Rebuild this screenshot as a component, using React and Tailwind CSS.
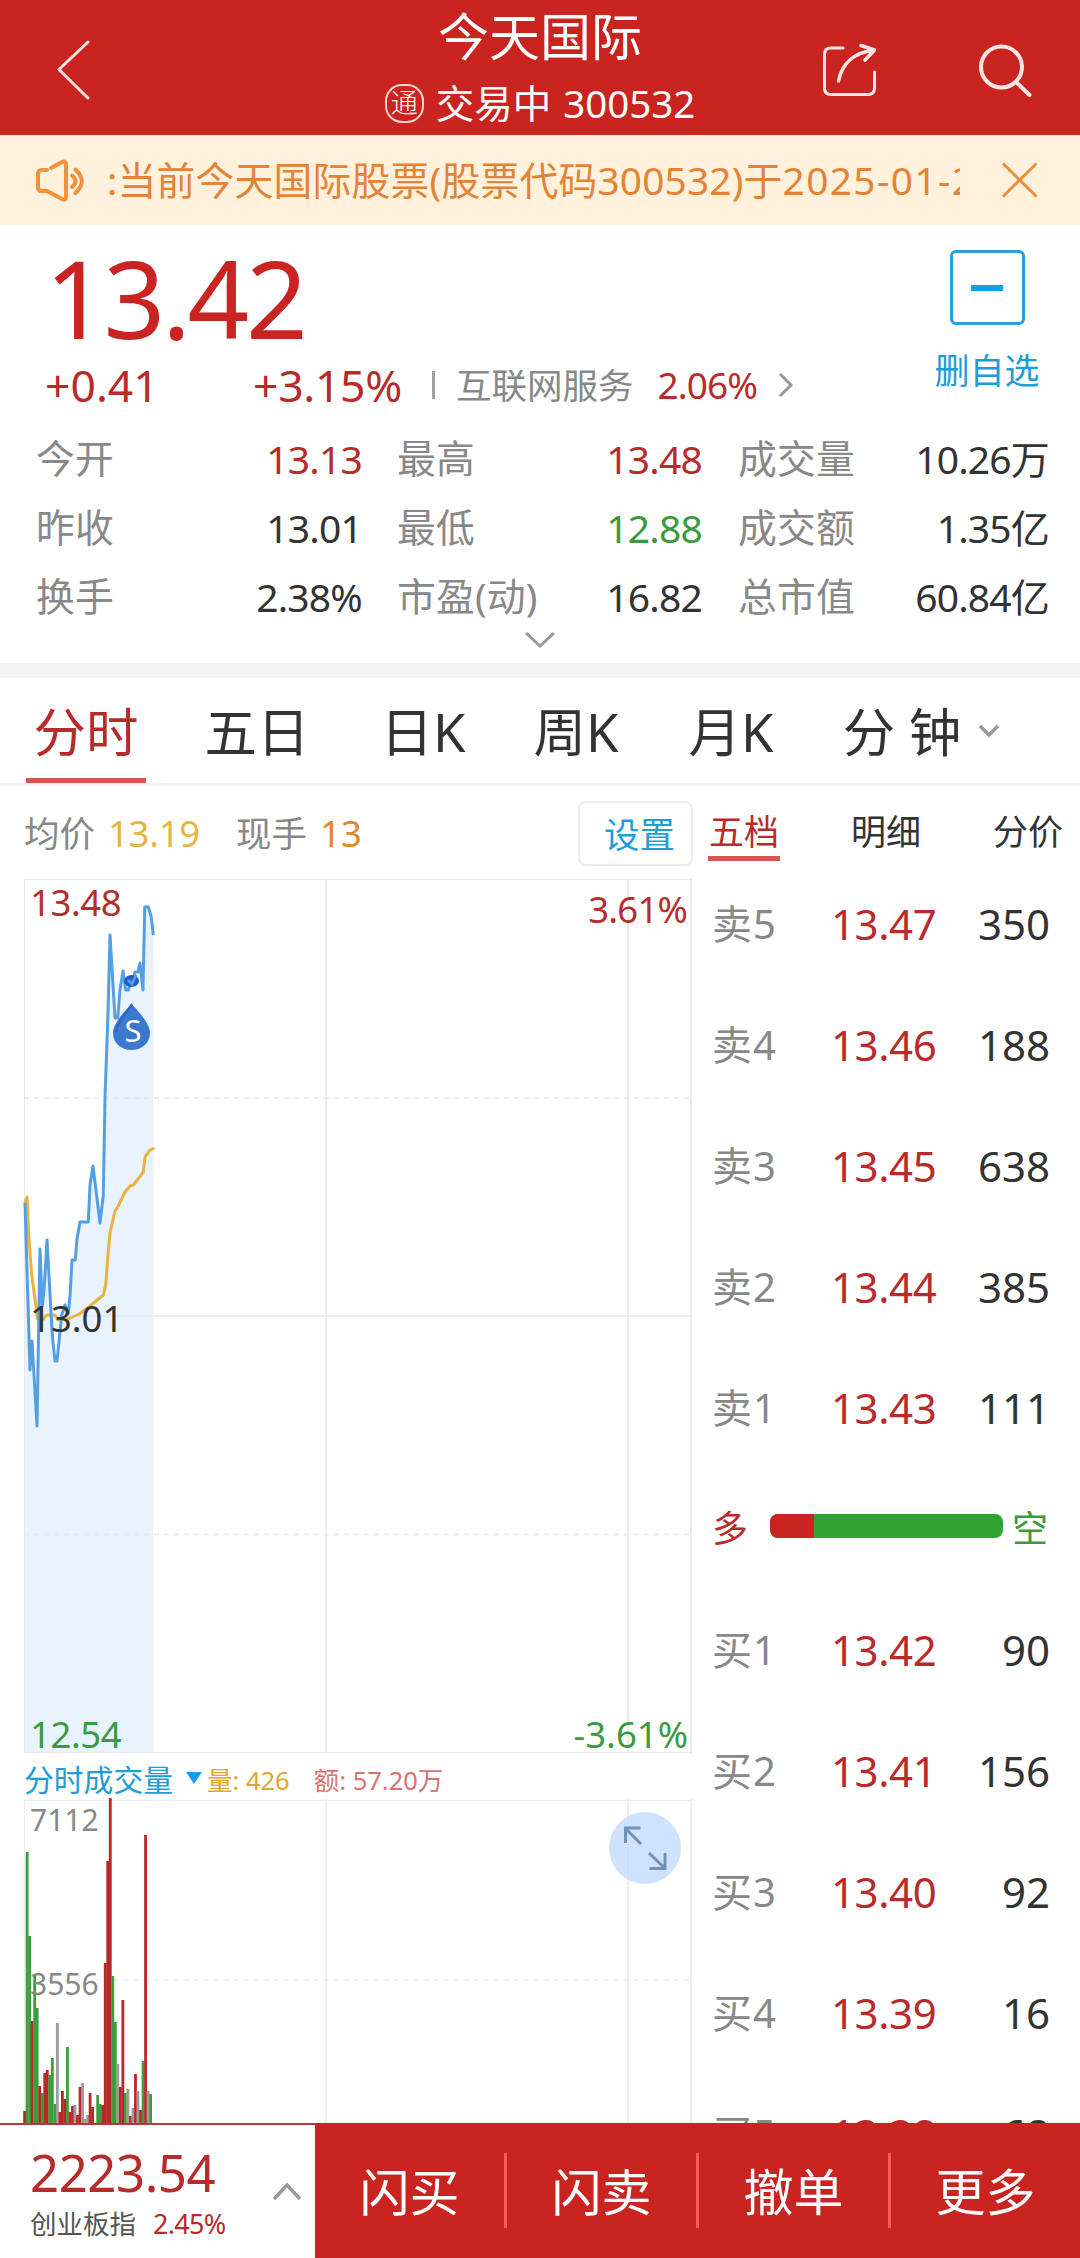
import React, {useState} from 'react';

const quoteRows = [
    [['今开', '13.13', 'text-[#b92b2b]'], ['最高', '13.48', 'text-[#b92b2b]'], ['成交量', '10.26万', 'text-[#333]']],
    [['昨收', '13.01', 'text-[#333]'], ['最低', '12.88', 'text-[#3a9b3c]'], ['成交额', '1.35亿', 'text-[#333]']],
    [['换手', '2.38%', 'text-[#333]'], ['市盈(动)', '16.82', 'text-[#333]'], ['总市值', '60.84亿', 'text-[#333]']],
];

const sells = [
    ['卖5', '13.47', 350],
    ['卖4', '13.46', 188],
    ['卖3', '13.45', 638],
    ['卖2', '13.44', 385],
    ['卖1', '13.43', 111],
];

const buys = [
    ['买1', '13.42', 90],
    ['买2', '13.41', 156],
    ['买3', '13.40', 92],
    ['买4', '13.39', 16],
    ['买5', '13.38', 68],
];

const pricePoints = '25,1203 30,1370 32,1341 37,1426 40,1249 42.3,1306 44.3,1287 47,1240 52.3,1335 55,1361 57,1361 61.7,1315 65,1305 68.3,1313 70,1296 72,1260 75.3,1260 77,1239 80,1222 88.3,1222 90,1185 93,1166 100,1223 103.3,1195 105,1097 108,1013 110,935 115,1018 117.7,1018 120,990 123,971 125.7,990 128.3,990 130.7,982 133.3,979 135,972 138,972 140,963 143,990 144.7,907 148.3,907 151.3,917 153.3,935';
const avgPoints = '25,1203 27,1197 28.7,1235 31.7,1275 36,1306 37.3,1319 43.3,1319 46.7,1315 55,1315 57.7,1320 68.3,1319 80,1313.5 90,1306 103.3,1295 105.7,1285 108,1254 110,1233 115,1211 118.3,1206 125,1192 130,1186 133.3,1185 143.3,1172 145,1157 150,1150 153.3,1148.5';

// [方向, 高度]  r: 涨  g: 跌  n: 平
const volumes = [
    ['r', 12], ['g', 271], ['g', 187], ['r', 102], ['g', 148], ['g', 115], ['r', 37], ['g', 30], ['r', 50], ['r', 53],
    ['g', 48], ['g', 65], ['g', 19], ['n', 100], ['r', 11], ['r', 32], ['r', 24], ['g', 76], ['r', 11], ['r', 17],
    ['n', 18], ['r', 8], ['r', 36], ['n', 40], ['n', 4], ['n', 8], ['r', 30], ['r', 16], ['n', 0], ['g', 28],
    ['g', 19], ['r', 18], ['r', 160], ['r', 262], ['r', 325], ['g', 147], ['g', 101], ['n', 59], ['r', 36], ['r', 123],
    ['g', 30], ['n', 34], ['r', 7], ['n', 15], ['r', 49], ['n', 32], ['r', 13], ['g', 62], ['r', 288], ['n', 32], ['g', 29],
];
const volumeColor = {r: '#b92727', g: '#3b9d3b', n: '#9c9c9c'};

const Header = () => (
    <header className="h-[135px] shrink-0 bg-[#ca2421] flex text-white">
        <svg className="w-[360px] h-[135px]" viewBox="0 0 360 135" fill="none">
            <path d="M88 42L59 69.5L88 98" stroke="#ffe4e2" strokeWidth="3" strokeLinecap="round"/>
        </svg>
        <div className="w-[360px] flex flex-col items-center">
            <h1 className="text-[51px] leading-[73px] h-[77px]">今天国际</h1>
            <div className="flex items-center h-[52px] text-[38.5px] leading-[52px]">
                <span className="w-[39px] h-[39px] mr-3 rounded-[17px] border-2 border-[#ffd5d2] text-[27px] leading-[34px] text-center font-light">通</span>
                <span>交易中</span>
                <span className="ml-3">300532</span>
            </div>
        </div>
        <svg className="w-[360px] h-[135px]" viewBox="720 0 360 135" fill="none" stroke="#ffe6e4" strokeLinecap="round">
            <path d="M843 48H831Q824.5 48 824.5 54.500V88Q824.5 94.500 831 94.500H868Q874.500 94.500 874.500 88V72" strokeWidth="3"/>
            <path d="M838.500 81C842 64 852 53 874 50M861 45.500L874.500 50L865 60" strokeWidth="3.600" strokeLinejoin="round"/>
            <circle cx="1001.500" cy="67" r="20.500" strokeWidth="4"/>
            <path d="M1016 82L1029.500 95" strokeWidth="4"/>
        </svg>
    </header>
);

const Notice = () => (
    <div className="h-[90px] shrink-0 bg-[#fff1dc] flex items-center">
        <svg className="w-[105px] h-[90px] shrink-0" viewBox="0 135 105 90" fill="none" stroke="#f0923c" strokeWidth="4"
             strokeLinecap="round" strokeLinejoin="round">
            <path d="M47 170H42Q38 170 38 174V187Q38 191 42 191H47L62 199Q66 201 66 197V165Q66 160 62 162L51 168"/>
            <path d="M72 175.500Q79 181 72 187M75.500 169.500Q88 181 75.500 193"/>
        </svg>
        <div className="w-[855px] overflow-hidden whitespace-nowrap text-[38.8px] leading-[92px] tracking-[0.2px] text-[#e38338]">
            <span className="-ml-[37px]">示:当前今天国际股票(股票代码300532)于</span>
            <span className="tracking-[1.4px]">2025-01-24</span>
        </div>
        <svg className="w-[120px] h-[90px] shrink-0" viewBox="960 135 120 90" stroke="#e5923c" strokeWidth="3">
            <path d="M1003 163.500L1036.500 196.500M1036.500 163.500L1003 196.500"/>
        </svg>
    </div>
);

const Quote = () => (
    <section className="h-[438px] shrink-0 flex flex-col">
        <div className="flex h-[200px]">
            <div className="flex-1">
                <div className="pl-[45px] pt-[17px] text-[108px] leading-[112px] h-[132px] tracking-[-3.3px] text-[#c92422]">13.42</div>
                <div className="flex items-center h-[56px] leading-[56px] text-[#b92b2b]">
                    <span className="pl-[45px] w-[253px] text-[44.5px]">+0.41</span>
                    <span className="w-[136px] whitespace-nowrap text-[44.500px] tracking-[-0.3px]">+3.15%</span>
                    <span className="ml-[43px] w-[3px] h-[28px] bg-[#a0a0a0]"/>
                    <span className="ml-[21px] text-[35.5px] text-[#888]">互联网服务</span>
                    <span className="ml-[24px] text-[37px] tracking-[-0.9px]">2.06%</span>
                    <svg className="ml-[21px] w-4 h-7" viewBox="0 0 16 28" fill="none" stroke="#999" strokeWidth="3">
                        <path d="M2 3L13 14L2 25"/>
                    </svg>
                </div>
            </div>
            <div className="w-[186px] pt-[25px] flex flex-col items-center">
                <div className="w-[75px] h-[75px] border-3 border-[#2b9fd6] rounded-md flex items-center justify-center">
                    <span className="w-8 h-[6px] bg-[#119fe9]"/>
                </div>
                <span className="mt-[21px] text-[35px] leading-[50px] text-[#209cd6]">删自选</span>
            </div>
        </div>
        <div className="text-[39px] -mt-[1px]">
            {quoteRows.map((row, i) => (
                <div key={i} className="flex h-[69px] leading-[69px] pl-[36px] pr-[31px]">
                    {row.map(([label, value, color], j) => (
                        <div key={label} className={`flex justify-between ${j === 2 ? 'w-[312px]' : j === 1 ? 'w-[306px] mr-[36px]' : 'w-[327px] mr-[35px]'}`}>
                            <span className="text-[38.8px] tracking-[0.2px] text-[#888]">{label}</span>
                            <span className={`tracking-[-0.8px] ${color}`}>{value}</span>
                        </div>
                    ))}
                </div>
            ))}
        </div>
        <svg className="w-[34px] h-[20px] mx-auto -mt-[1px]" viewBox="0 0 34 20" fill="none" stroke="#999" strokeWidth="3">
            <path d="M3 3L17 16L31 3"/>
        </svg>
    </section>
);

const Tabs = ({active, onChange}) => {
    const tabs = [
        ['分时', 'w-[120px] ml-[26px]'],
        ['五日', 'w-[120px] ml-[51px]'],
        ['日K', 'w-[120px] ml-[46px]'],
        ['周K', 'w-[120px] ml-[33px]'],
        ['月K', 'w-[120px] ml-[35px]'],
        ['分 钟', 'w-[140px] ml-[41px]'],
    ];
    return (
        <nav className="h-[108px] shrink-0 flex border-b-3 border-[#f2f2f2]">
            {tabs.map(([name, box]) => (
                <button key={name} onClick={() => onChange(name)}
                        className={`${box} h-[105px] pt-[9px] text-[52.5px] whitespace-nowrap border-b-5 ${active === name ? 'text-[#b92b2b] border-[#d9534f]' : 'text-[#333] border-transparent'}`}>
                    {name}
                </button>
            ))}
            <svg className="w-6 h-6 mt-[41px] ml-[5px]" viewBox="0 0 24 24" fill="none" stroke="#999" strokeWidth="3.5">
                <path d="M3 7L12 16L21 7"/>
            </svg>
        </nav>
    );
};

const PriceChart = () => (
    <svg className="block w-[700px] h-[890px]" viewBox="0 870 700 890" fill="none">
        <polygon points={`${pricePoints} 153.3,1752 25,1752`} fill="#e8f3fd"/>
        <g stroke="#e8e8e8" strokeWidth="1.600">
            <path d="M24 879.500H692M24 1752.500H692" strokeWidth="1.200"/>
            <path d="M24.500 879V1753" strokeWidth="1"/>
            <path d="M326 878V1754M628 878V1754M691 878V1754"/>
            <path d="M24 1316H691"/>
            <path d="M24 1098H691M24 1534.500H691" strokeDasharray="5 5"/>
        </g>
        <polyline points={avgPoints} stroke="#eab23f" strokeWidth="3" strokeLinejoin="round" strokeLinecap="round"/>
        <polyline points={pricePoints} stroke="#539fe2" strokeWidth="3" strokeLinejoin="round"/>
        <ellipse cx="131.500" cy="981" rx="7.500" ry="6" fill="#2459bd"/>
        <path d="M128 980L132 984L136 975" stroke="#4d9bee" strokeWidth="3"/>
        <path d="M131.500 1003C136 1010 150 1022 150 1033C150 1043 142 1050 131.500 1050C121 1050 113 1043 113 1033C113 1022 127 1010 131.500 1003Z" fill="#3b78d0"/>
        <path d="M131.500 1005C127 1012 117 1022 116 1032" stroke="#2f62bd" strokeWidth="2"/>
        <text x="133" y="1042" textAnchor="middle" fontSize="31" fill="#fff">S</text>
        <g fontSize="36.500">
            <text x="30" y="915.500" letterSpacing="-0.4" fill="#b52d2d">13.48</text>
            <text x="30" y="1332" fill="#333">13.01</text>
            <text x="30" y="1747.500" letterSpacing="-0.4" fill="#3b9b3d">12.54</text>
            <text x="687" y="922.500" letterSpacing="-0.8" textAnchor="end" fill="#b52d2d">3.61%</text>
            <text x="688" y="1747.500" textAnchor="end" fill="#3b9b3d">-3.61%</text>
        </g>
    </svg>
);

const VolumeChart = () => (
    <svg className="block w-[700px] h-[327px]" viewBox="0 1796 700 327" fill="none">
        <g stroke="#ebebeb" strokeWidth="1.600">
            <path d="M24 1800.500H692" strokeWidth="1.200"/>
            <path d="M24.500 1800V2123" strokeWidth="1"/>
            <path d="M326 1799V2123M628 1799V2123M691 1799V2123"/>
            <path d="M24 1980H691" strokeDasharray="5 5"/>
        </g>
        {volumes.map(([dir, h], i) => (
            <rect key={i} x={23.2 + i * 2.52} y={2123 - h} width="2.8" height={h} fill={volumeColor[dir]}/>
        ))}
        <g fontSize="30" fill="#888">
            <text x="30" y="1831">7112</text>
            <text x="30" y="1995">3556</text>
        </g>
    </svg>
);

const OrderRow = ({row}) => (
    <div className="flex h-[121px] items-center text-[42px] shrink-0">
        <span className="w-[119px] text-[40px] tracking-[1px] text-[#888]">{row[0]}</span>
        <span className="w-[118px] tracking-[-0.4px] text-[#b92b2b]">{row[1]}</span>
        <span className="flex-1 text-right text-[#333]">{row[2]}</span>
    </div>
);

const OrderBook = () => (
    <div className="w-[380px] pl-[12px] pr-[30px] flex flex-col">
        <div className="h-[77px] -mr-[18px] flex text-[35px] text-[#333] leading-[52px] shrink-0">
            <div className="ml-[-4px] mt-[20px] w-[72px] h-[55px] text-center text-[#b92b2b] border-b-5 border-[#d9534f]">五档</div>
            <div className="ml-[71px] mt-[20px]">明细</div>
            <div className="ml-[72px] mt-[20px]">分价</div>
        </div>
        {sells.map(row => <OrderRow key={row[0]} row={row}/>)}
        <div className="flex h-[121px] items-center text-[36px] shrink-0">
            <span className="text-[#b92b2b]">多</span>
            <div className="ml-[22px] -mt-[5px] w-[233px] h-6 rounded-lg overflow-hidden bg-[#30a331] flex">
                <span className="w-11 bg-[#c92422]"/>
            </div>
            <span className="ml-[9px] text-[#3a9b3c]">空</span>
        </div>
        {buys.map(row => <OrderRow key={row[0]} row={row}/>)}
    </div>
);

const BottomBar = () => (
    <footer className="h-[135px] shrink-0 flex bg-[#ca2421] text-white">
        <div className="w-[315px] border-t-2 border-[#b23a38] bg-white flex items-center">
            <div className="w-[242px] pl-[30px] pt-[4px]">
                <div className="text-[51px] leading-[60px] tracking-[-0.5px] text-[#b92b2b]">2223.54</div>
                <div className="flex items-center text-[26.5px] leading-[44px]">
                    <span className="text-[#555]">创业板指</span>
                    <span className="ml-[17px] text-[27px] tracking-[-0.7px] text-[#b92b2b]">2.45%</span>
                </div>
            </div>
            <svg className="ml-[29px] w-[32px] h-[20px]" viewBox="0 0 32 20" fill="none" stroke="#999" strokeWidth="3.500">
                <path d="M3 17L16 3L29 17"/>
            </svg>
        </div>
        {['闪买', '闪卖', '撤单', '更多'].map((name, i) => (
            <div key={name} className={`flex items-center ${i === 0 ? 'w-[189px]' : 'w-[192px]'}`}>
                {i > 0 && <span className="w-[3px] h-[75px] bg-[#ff5a52]"/>}
                <button className="flex-1 text-[50px] pt-[3px]">{name}</button>
            </div>
        ))}
    </footer>
);

export default function App() {
    const [tab, setTab] = useState('分时');

    return (
        <div className="w-[1080px] h-[2258px] overflow-hidden bg-white flex flex-col font-['Noto_Sans','Noto_Sans_CJK_SC',sans-serif]">
            <Header/>
            <Notice/>
            <Quote/>
            <div className="h-[15px] shrink-0 bg-[#f4f4f4]"/>
            <Tabs active={tab} onChange={setTab}/>
            <main className="flex-1 min-h-0 overflow-hidden flex">
                <div className="relative w-[700px] shrink-0">
                    <div className="h-[84px] flex pl-[24px] pt-[15px] text-[35.5px] leading-[64px] text-[#888]">
                        <span>均价</span>
                        <span className="ml-[13px] w-[128px] text-[36.5px] text-[#e9b440] tracking-[-0.3px]">13.19</span>
                        <span>现手</span>
                        <span className="ml-[13px] text-[36.5px] text-[#e38628]">13</span>
                        <button className="ml-auto mr-[7px] w-[115px] h-[65px] pl-2 rounded-lg border-2 border-[#eee] leading-[60px] text-[#1f9ed9]">设置</button>
                    </div>
                    <PriceChart/>
                    <div className="h-[36px] flex items-center pl-[24px] text-[25.5px] leading-[36px] whitespace-nowrap">
                        <span className="pt-[3px] text-[29.8px] text-[#209cd6]">分时成交量</span>
                        <svg className="ml-[13px] w-4 h-3" viewBox="0 0 16 12"><path d="M0 0H16L8 12Z" fill="#109fe9"/></svg>
                        <span className="ml-[5px] pt-[4px] text-[#e3a62c]">量: 426</span>
                        <span className="ml-[24px] pt-[4px] text-[#d87370]">额: 57.20万</span>
                    </div>
                    <VolumeChart/>
                    <button className="absolute left-[609px] top-[1026px] w-[72px] h-[72px] rounded-full bg-[#bfd8fe]/75">
                        <svg className="w-[72px] h-[72px]" viewBox="0 0 72 72" fill="none" stroke="#7391b8" strokeWidth="3">
                            <path d="M32 32L16.500 16.500M16.500 31V16H31.500M40 41L55.500 56M56 41V56.500H40.500"/>
                        </svg>
                    </button>
                </div>
                <OrderBook/>
            </main>
            <BottomBar/>
        </div>
    );
}
